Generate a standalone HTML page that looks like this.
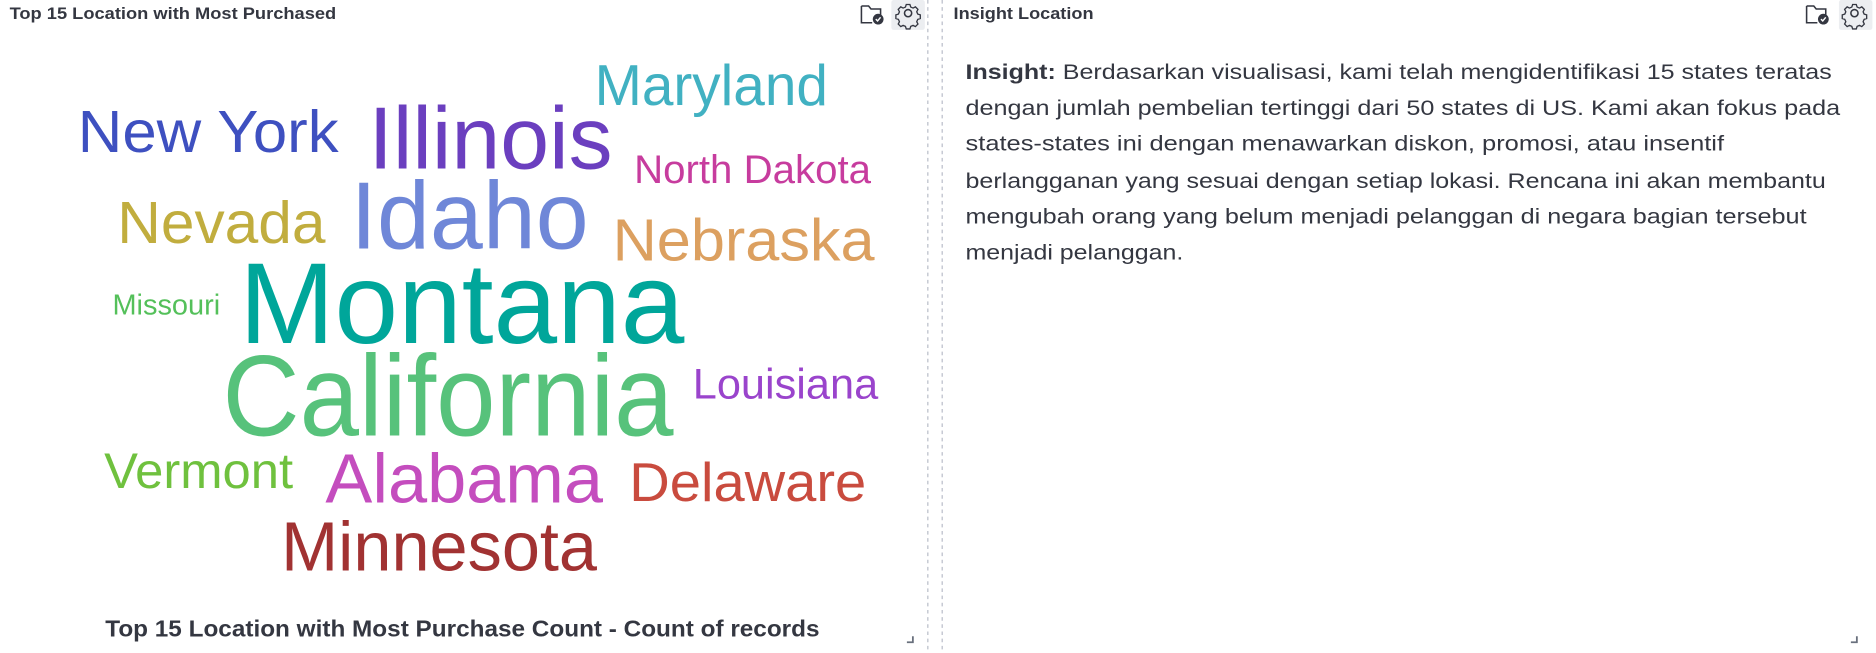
<!DOCTYPE html>
<html><head><meta charset="utf-8"><style>
html,body{margin:0;padding:0;background:#fff;width:1876px;height:653px;overflow:hidden}
svg{display:block}
text{font-family:"Liberation Sans",Arial,sans-serif}
</style></head><body>
<svg width="1876" height="653" viewBox="0 0 1568 546" preserveAspectRatio="none" xmlns="http://www.w3.org/2000/svg">
<rect width="1568" height="546" fill="#fff"/>
<!-- dividers -->
<line x1="775.5" y1="0" x2="775.5" y2="546" stroke="#b8bcc8" stroke-dasharray="3,3"/>
<line x1="787.5" y1="0" x2="787.5" y2="546" stroke="#b8bcc8" stroke-dasharray="3,3"/>
<!-- titles -->
<text x="8" y="16" font-size="14" font-weight="bold" fill="#343741" textLength="273" lengthAdjust="spacingAndGlyphs">Top 15 Location with Most Purchased</text>
<text x="797" y="16" font-size="14" font-weight="bold" fill="#343741" textLength="117" lengthAdjust="spacingAndGlyphs">Insight Location</text>
<!-- icons left -->
<g id="ic" fill="none" stroke="#343741" stroke-width="1.3">
<path d="M720 5h6l2 2.5h8v5M720 5v14h9"/>
</g>
<circle cx="734" cy="16" r="4.5" fill="#343741"/>
<path d="M732 16l1.5 1.5 2.5-3" stroke="#fff" stroke-width="1.2" fill="none"/>
<rect x="745" y="0" width="28" height="25" fill="#eceef1" rx="2"/>
<g transform="translate(759,11)" fill="none" stroke="#343741" stroke-width="1.3">
<circle r="3"/>
<path d="M-1.8-8.5h3.6l.8 2.5 2.3 1 2.3-1.2 2.5 2.5-1.2 2.3 1 2.3 2.5.8v3.6l-2.5.8-1 2.3 1.2 2.3-2.5 2.5-2.3-1.2-2.3 1-.8 2.5h-3.6l-.8-2.5-2.3-1-2.3 1.2-2.5-2.5 1.2-2.3-1-2.3-2.5-.8v-3.6l2.5-.8 1-2.3-1.2-2.3 2.5-2.5 2.3 1.2 2.3-1z" transform="scale(0.85)"/>
</g>
<!-- icons right -->
<g fill="none" stroke="#343741" stroke-width="1.3">
<path d="M1510 5h6l2 2.5h8v5M1510 5v14h9"/>
</g>
<circle cx="1524" cy="16" r="4.5" fill="#343741"/>
<path d="M1522 16l1.5 1.5 2.5-3" stroke="#fff" stroke-width="1.2" fill="none"/>
<rect x="1537" y="0" width="28" height="25" fill="#eceef1" rx="2"/>
<g transform="translate(1550,11)" fill="none" stroke="#343741" stroke-width="1.3">
<circle r="3"/>
<path d="M-1.8-8.5h3.6l.8 2.5 2.3 1 2.3-1.2 2.5 2.5-1.2 2.3 1 2.3 2.5.8v3.6l-2.5.8-1 2.3 1.2 2.3-2.5 2.5-2.3-1.2-2.3 1-.8 2.5h-3.6l-.8-2.5-2.3-1-2.3 1.2-2.5-2.5 1.2-2.3-1-2.3-2.5-.8v-3.6l2.5-.8 1-2.3-1.2-2.3 2.5-2.5 2.3 1.2 2.3-1z" transform="scale(0.85)"/>
</g>
<!-- word cloud -->
<g lengthAdjust="spacingAndGlyphs">
<text x="497" y="88" font-size="48" fill="#41b1c2" textLength="195" lengthAdjust="spacingAndGlyphs">Maryland</text>
<text x="65" y="127" font-size="50" fill="#3e50c0" textLength="218" lengthAdjust="spacingAndGlyphs">New York</text>
<text x="308" y="141" font-size="74" fill="#6b3fbf" textLength="204" lengthAdjust="spacingAndGlyphs">Illinois</text>
<text x="530" y="153" font-size="33" fill="#c73c9e" textLength="198" lengthAdjust="spacingAndGlyphs">North Dakota</text>
<text x="98" y="203" font-size="50" fill="#c1ad3e" textLength="174" lengthAdjust="spacingAndGlyphs">Nevada</text>
<text x="293" y="208" font-size="80" fill="#6f87d8" textLength="199" lengthAdjust="spacingAndGlyphs">Idaho</text>
<text x="512" y="218" font-size="50" fill="#dca060" textLength="219" lengthAdjust="spacingAndGlyphs">Nebraska</text>
<text x="94" y="263" font-size="24" fill="#54c05a" textLength="90" lengthAdjust="spacingAndGlyphs">Missouri</text>
<text x="200" y="287" font-size="96" fill="#00a69a" textLength="372" lengthAdjust="spacingAndGlyphs">Montana</text>
<text x="186" y="364" font-size="96" fill="#57c27b" textLength="377" lengthAdjust="spacingAndGlyphs">California</text>
<text x="579" y="333" font-size="36" fill="#9a44cc" textLength="155" lengthAdjust="spacingAndGlyphs">Louisiana</text>
<text x="87" y="408" font-size="42" fill="#6fc13e" textLength="158" lengthAdjust="spacingAndGlyphs">Vermont</text>
<text x="272" y="420" font-size="58" fill="#c44dbe" textLength="232" lengthAdjust="spacingAndGlyphs">Alabama</text>
<text x="526" y="419" font-size="46" fill="#c94b3e" textLength="198" lengthAdjust="spacingAndGlyphs">Delaware</text>
<text x="235" y="477" font-size="58" fill="#a13232" textLength="264" lengthAdjust="spacingAndGlyphs">Minnesota</text>
</g>
<text x="88" y="532" font-size="19" font-weight="bold" fill="#343741" textLength="597" lengthAdjust="spacingAndGlyphs">Top 15 Location with Most Purchase Count - Count of records</text>
<!-- resize corners -->
<path d="M758 537h5v-5" stroke="#69707d" stroke-width="1.5" fill="none"/>
<path d="M1547 537h5v-5" stroke="#69707d" stroke-width="1.5" fill="none"/>
<!-- insight text -->
<g font-size="17.5" fill="#343741">
<text x="807" y="66" textLength="724" lengthAdjust="spacingAndGlyphs"><tspan font-weight="bold">Insight:</tspan> Berdasarkan visualisasi, kami telah mengidentifikasi 15 states teratas</text>
<text x="807" y="96" textLength="731" lengthAdjust="spacingAndGlyphs">dengan jumlah pembelian tertinggi dari 50 states di US. Kami akan fokus pada</text>
<text x="807" y="126" textLength="634" lengthAdjust="spacingAndGlyphs">states-states ini dengan menawarkan diskon, promosi, atau insentif</text>
<text x="807" y="157" textLength="719" lengthAdjust="spacingAndGlyphs">berlangganan yang sesuai dengan setiap lokasi. Rencana ini akan membantu</text>
<text x="807" y="187" textLength="703" lengthAdjust="spacingAndGlyphs">mengubah orang yang belum menjadi pelanggan di negara bagian tersebut</text>
<text x="807" y="217" textLength="182" lengthAdjust="spacingAndGlyphs">menjadi pelanggan.</text>
</g>
</svg>
</body></html>
